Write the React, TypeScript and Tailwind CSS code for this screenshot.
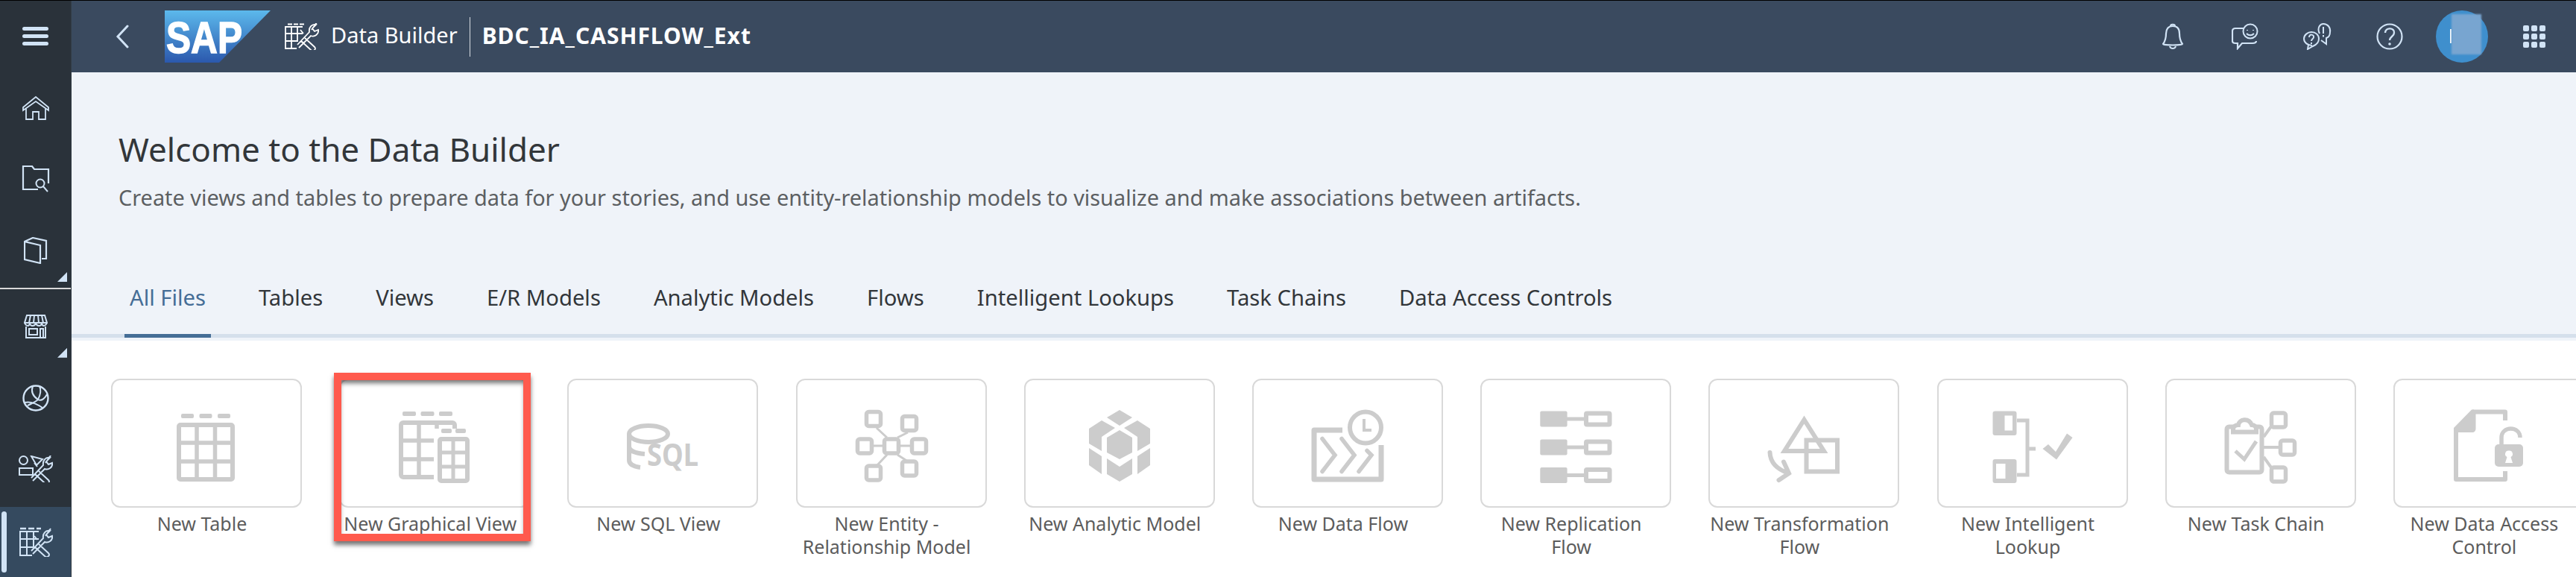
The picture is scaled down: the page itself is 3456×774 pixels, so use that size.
import type { ReactNode } from "react"

const FONT = "[font-family:'Noto_Sans','Open_Sans',sans-serif]"
const GREY = "#cccccc"
const SHELL = "#d1e3f5"

// card icons are drawn around the centre of the card, in page pixels
function CardIcon({ children }: { children: ReactNode }) {
  return (
    <svg width="160" height="130" viewBox="-80 -65 160 130" fill="none" stroke={GREY} strokeWidth="6">
      {children}
    </svg>
  )
}

function Dots({ x, y, w, gap, n }: { x: number; y: number; w: number; gap: number; n: number }) {
  return (
    <>
      {Array.from({ length: n }).map((_, i) => (
        <rect key={i} x={x + i * (w + gap)} y={y} width={w} height="6" rx="2" fill={GREY} stroke="none" />
      ))}
    </>
  )
}

function TableIcon() {
  return (
    <CardIcon>
      <Dots x={-34} y={-40} w={17} gap={7.5} n={3} />
      <rect x="-37" y="-25" width="72" height="73" rx="2" />
      <path d="M-13 -25V48M11.5 -25V48M-37 -1H35M-37 24H35" strokeWidth="5.5" />
    </CardIcon>
  )
}

function GraphicalViewIcon() {
  return (
    <CardIcon>
      <Dots x={-43} y={-43} w={18} gap={6.5} n={3} />
      <rect x="-45" y="-28" width="72" height="73" rx="3" />
      <path d="M-21 -28V45M3 -28V45M-45 -4H27M-45 21H27" strokeWidth="5.5" />
      <rect x="-1" y="-20" width="52" height="78" fill="#fff" stroke="none" />
      <Dots x={9} y={-20} w={14} gap={5} n={2} />
      <rect x="7" y="-6" width="37" height="56" rx="2" />
      <path d="M25 -6V50M7 12H44M7 31H44" strokeWidth="5" />
    </CardIcon>
  )
}

function SqlIcon() {
  return (
    <CardIcon>
      <ellipse cx="-19" cy="-13" rx="26" ry="11" />
      <path d="M-45 -13V22C-45 28 -38 31 -30 32M-45 4C-45 9 -38 13 -24 14" />
      <text
        x="-21"
        y="30"
        fill={GREY}
        stroke="none"
        fontFamily="'Noto Sans', sans-serif"
        fontWeight="700"
        fontSize="42"
        textLength="69"
        lengthAdjust="spacingAndGlyphs"
      >
        SQL
      </text>
    </CardIcon>
  )
}

function EntityIcon() {
  const boxes = [
    [-33.5, -42.5],
    [14.5, -36.5],
    [-45.5, -6],
    [-9.5, -6],
    [27.5, -6],
    [-33.5, 30],
    [14.5, 24],
  ]
  return (
    <CardIcon>
      <path d="M-20 -21L-6 -8M22 -15L8 -8M-25 3H-12M12 3H25M-20 30L-6 15M22 24L8 15" strokeWidth="3" />
      {boxes.map(([x, y], i) => (
        <rect key={i} x={x} y={y} width="19" height="19" rx="3" strokeWidth="5.5" />
      ))}
    </CardIcon>
  )
}

function AnalyticIcon() {
  return (
    <CardIcon>
      <g fill={GREY} stroke="none">
        <polygon points="0,-45 17,-35 0,-24 -17,-35" />
        <polygon points="0,-18 17,-8 17,12 0,21 -17,12 -17,-8" />
        <polygon points="-24,-31 -6,-21 -24,-9 -24,10 -41,0 -41,-20" />
        <polygon points="24,-31 6,-21 24,-9 24,10 41,0 41,-20" />
        <polygon points="-41,6 -24,17 -24,41 -41,29" />
        <polygon points="41,6 24,17 24,41 41,29" />
        <polygon points="-17,20 0,31 17,20 17,41 0,51 -17,41" />
      </g>
    </CardIcon>
  )
}

function DataFlowIcon() {
  return (
    <CardIcon>
      <path d="M-7 -18H-45V48H45V2" strokeWidth="7" strokeLinejoin="round" />
      <circle cx="24" cy="-21.5" r="21" />
      <path d="M22 -33V-18H32" strokeWidth="4" />
      <path
        d="M-34 -6.5L-17 15.5L-34 37.5M-8 -6.5L9 15.5L-8 37.5M26 9.5L32 15.5L15 37.5"
        strokeWidth="5.5"
        strokeLinecap="round"
      />
    </CardIcon>
  )
}

function ReplicationIcon() {
  const rows = [-43.5, -5.5, 32]
  return (
    <CardIcon>
      {rows.map((y) => (
        <g key={y}>
          <rect x="-47.7" y={y} width="36.3" height="21" rx="2" fill={GREY} stroke="none" />
          <path d={`M-12 ${y + 10.5}H12`} strokeWidth="5" />
          <rect x="14" y={y + 3} width="31.5" height="15" rx="1" />
        </g>
      ))}
    </CardIcon>
  )
}

function TransformationIcon() {
  return (
    <CardIcon>
      <path d="M0.5 -32L27 10H-26Z" />
      <rect x="3.5" y="-4.5" width="41.5" height="42" />
      <path d="M-45.5 12C-45 24 -38 34 -20 40M-27 24.5L-20 40L-33.5 49" strokeLinecap="round" />
    </CardIcon>
  )
}

function LookupIcon() {
  return (
    <CardIcon>
      <path d="M-21 -31H-7V42H-21M-7 7H4" strokeWidth="5" />
      <rect x="-53.5" y="-43.5" width="32" height="32.5" rx="3" fill={GREY} stroke="none" />
      <rect x="-37.5" y="-37.5" width="10.5" height="20" fill="#fff" stroke="none" />
      <rect x="-53.5" y="21" width="32" height="32" rx="3" fill={GREY} stroke="none" />
      <rect x="-49" y="27" width="12.5" height="20" fill="#fff" stroke="none" />
      <polygon points="13.5,7 21,1 31,11 46,-13.5 53.5,-8 32,21.5" fill={GREY} stroke="none" />
    </CardIcon>
  )
}

function TaskChainIcon() {
  return (
    <CardIcon>
      <rect x="-45.5" y="-22.5" width="47" height="61" rx="3" />
      <path
        d="M-37 -15.5V-19C-37 -23 -33 -25 -30 -25C-29 -33 -16 -35 -12 -25C-9 -25 -6 -23 -6 -19V-15.5Z"
        fill="#fff"
      />
      <path d="M-34 10L-22 21L-6 -3" strokeWidth="5" />
      <path d="M4 -9L14 -23M4 5H24M4 18L14 32" strokeWidth="4" />
      <rect x="14.5" y="-41" width="19" height="19" rx="3" strokeWidth="5.5" />
      <rect x="26.5" y="-4" width="19" height="19" rx="3" strokeWidth="5.5" />
      <rect x="14.5" y="32" width="19" height="19" rx="3" strokeWidth="5.5" />
    </CardIcon>
  )
}

function AccessIcon() {
  return (
    <CardIcon>
      <path d="M-22 -42.5H22V-31M-44 -15V48H22V37" strokeLinejoin="round" />
      <path d="M-23 -45.5L-47 -21V-15H-22C-19.5 -15 -17.5 -17 -17.5 -20V-40H-20V-45.5Z" fill={GREY} stroke="none" />
      <path d="M17 3V-8C17 -24 42 -24 42 -8" strokeWidth="5.5" />
      <rect x="8" y="1" width="38" height="30" rx="5" fill={GREY} stroke="none" />
      <path d="M27 9.5A4.5 4.5 0 0 1 29.5 18L32 26H22L24.500 18A4.5 4.5 0 0 1 27 9.5Z" fill="#fff" stroke="none" />
    </CardIcon>
  )
}

const cards = [
  { label: "New Table", icon: <TableIcon /> },
  { label: "New Graphical View", icon: <GraphicalViewIcon />, marked: true },
  { label: "New SQL View", icon: <SqlIcon /> },
  { label: "New Entity - Relationship Model", icon: <EntityIcon /> },
  { label: "New Analytic Model", icon: <AnalyticIcon /> },
  { label: "New Data Flow", icon: <DataFlowIcon /> },
  { label: "New Replication Flow", icon: <ReplicationIcon /> },
  { label: "New Transformation Flow", icon: <TransformationIcon /> },
  { label: "New Intelligent Lookup", icon: <LookupIcon /> },
  { label: "New Task Chain", icon: <TaskChainIcon /> },
  { label: "New Data Access Control", icon: <AccessIcon /> },
]

const tabs = [
  "All Files",
  "Tables",
  "Views",
  "E/R Models",
  "Analytic Models",
  "Flows",
  "Intelligent Lookups",
  "Task Chains",
  "Data Access Controls",
]

function ShellIcon({ w, h, children }: { w: number; h: number; children: ReactNode }) {
  return (
    <svg width={w} height={h} viewBox={`0 0 ${w} ${h}`} fill="none" stroke={SHELL} strokeWidth="2">
      {children}
    </svg>
  )
}

const toolsPath =
  "M20 33L36 16C35 10 39 5 45 6L40 11L43 15L48 13C49 19 43 23 38 21L22 37M28 18L24 13M30 24L43 36C46 39 41 43 38 40L25 28M39 13L46 3"

const sideItems: { icon: ReactNode; corner?: boolean }[] = [
  {
    icon: (
      <ShellIcon w={36} h={32}>
        <path d="M1 15L18 1L35 15V19L18 7L1 19ZM5 17V31H14V21H22V31H31V17" strokeWidth="1.800" />
      </ShellIcon>
    ),
  },
  {
    icon: (
      <ShellIcon w={38} h={36}>
        <path d="M22 32H2V1H14L17 5H36V24" strokeWidth="2.200" />
        <circle cx="25" cy="24" r="5.500" />
        <path d="M29 28L35 35" />
      </ShellIcon>
    ),
  },
  {
    icon: (
      <ShellIcon w={32} h={36}>
        <path d="M1 6V30L22 35V11L1 6L12 1L30 5V29H24" strokeWidth="2.200" />
      </ShellIcon>
    ),
    corner: true,
  },
]

const sideItemsBelow: { icon: ReactNode; corner?: boolean }[] = [
  {
    icon: (
      <ShellIcon w={32} h={32}>
        <path d="M4 1H28L31 11H1Z" />
        <path d="M9 1L7 11M14 1L13 11M19 1L20 11M24 1L26 11" />
        <path d="M1 11C3 16 7 16 8 12C9 16 14 16 16 12C18 16 23 16 24 12C25 16 29 16 31 11" />
        <path d="M3 16V31H29V16M7 19H18V27H7ZM22 31V19H26V31" />
      </ShellIcon>
    ),
    corner: true,
  },
  {
    icon: (
      <ShellIcon w={36} h={36}>
        <circle cx="18" cy="18" r="16.500" strokeWidth="2.400" />
        <path d="M14 2C11 10 15 16 21 20C26 23 31 17 33 13M3 24C11 22 20 26 27 31M21 20C18 23 13 25 7 28M23 2C26 8 24 14 21 20" />
      </ShellIcon>
    ),
  },
  {
    icon: (
      <ShellIcon w={46} h={36}>
        <circle cx="6.500" cy="6.500" r="5.500" />
        <rect x="1" y="17" width="18" height="9" />
        <path d="M17 1L32 5L24 13Z" />
        <path d={toolsPath} transform="translate(-3 -3)" />
      </ShellIcon>
    ),
  },
]

function SideButton({ icon, corner }: { icon: ReactNode; corner?: boolean }) {
  return (
    <div className="relative flex h-[96px] w-full items-center justify-center">
      {icon}
      {corner && <span className="absolute right-[5px] bottom-[6px] h-[13px] w-[13px] bg-[#d1e3f5] [clip-path:polygon(100%_0,100%_100%,0_100%)]" />}
    </div>
  )
}

function Sidebar() {
  return (
    <aside className="flex h-full w-[96px] shrink-0 flex-col border-r border-[#333c45] bg-[#2a323a]">
      <div className="flex h-[96px] items-center justify-center">
        <div className="flex w-[35px] flex-col gap-[5px]">
          <span className="h-[5px] rounded-full bg-[#d1e3f5]" />
          <span className="h-[5px] rounded-full bg-[#d1e3f5]" />
          <span className="h-[5px] rounded-full bg-[#d1e3f5]" />
        </div>
      </div>
      {sideItems.map((item, i) => (
        <SideButton key={i} {...item} />
      ))}
      <div className="my-[2px] h-[2px] bg-[#d9d9d9]" />
      {sideItemsBelow.map((item, i) => (
        <SideButton key={i} {...item} />
      ))}
      <div className="relative mt-[3px] flex h-[94px] items-center justify-center bg-[#354a5f]">
        <span className="absolute top-[6px] left-[2px] h-[82px] w-[7px] rounded-full bg-[#d1e3f5]" />
        <ShellIcon w={46} h={40}>
          <path d="M2 2H10M13 2H21M24 2H30" strokeWidth="2.500" />
          <path d="M27 6H2V38H18M2 16H27M2 27H20M11 6V38M20 6V28" />
          <path d={toolsPath} transform="translate(-3 -1)" />
        </ShellIcon>
      </div>
    </aside>
  )
}

function SapLogo() {
  return (
    <svg width="142" height="70" viewBox="0 0 142 70">
      <defs>
        <linearGradient id="sapBlue" x1="0" y1="0" x2="0" y2="1">
          <stop offset="0" stopColor="#5cb9ec" />
          <stop offset="1" stopColor="#2b58ad" />
        </linearGradient>
      </defs>
      <polygon points="0,0 142,0 73,70 0,70" fill="url(#sapBlue)" />
      <text
        x="2"
        y="57"
        fill="#fff"
        stroke="#fff"
        strokeWidth="1.500"
        fontFamily="'Liberation Sans', sans-serif"
        fontWeight="700"
        fontSize="60"
        textLength="102"
        lengthAdjust="spacingAndGlyphs"
      >
        SAP
      </text>
    </svg>
  )
}

function Header() {
  return (
    <header className="flex h-[96px] items-center bg-[#3a4a5f] text-white">
      <div className="ml-[59px] mr-[48px]">
        <svg width="18" height="32" viewBox="0 0 18 32" fill="none" stroke={SHELL} strokeWidth="3" strokeLinecap="round">
          <path d="M16 2L3 16L16 30" />
        </svg>
      </div>
      <SapLogo />
      <div className="ml-[19px] mr-[16px]">
        <svg width="46" height="36" viewBox="0 0 46 36" fill="none" stroke="#fff" strokeWidth="1.800">
          <path d="M4 1.500H10M12 1.500H18M20 1.500H26" />
          <path d="M24 5H1V34H16M1 14H24M1 24H18M9 5V34M17 5V24" />
          <path d={toolsPath} transform="translate(-3 -4)" />
        </svg>
      </div>
      <span className="mb-[3px] text-[29px] leading-[1.2]">Data Builder</span>
      <span className="mx-[16px] h-[53px] w-px bg-[#d8dde3]" />
      <span className="mb-[3px] text-[30px] leading-[1.2] font-bold tracking-[1px]">BDC_IA_CASHFLOW_Ext</span>

      <div className="ml-auto mr-[8px] flex items-center">
        <div className="flex w-[97px] justify-center">
          <ShellIcon w={32} h={36}>
            <path d="M3 28C6 24 7 21 7 14C7 8 10 4 16 4C22 4 25 8 25 14C25 21 26 24 29 28C29 30 3 30 3 28Z" strokeWidth="2.200" />
            <path d="M13 4C13 1 19 1 19 4M12 31C13 35 19 35 20 31" />
          </ShellIcon>
        </div>
        <div className="flex w-[97px] justify-center">
          <ShellIcon w={36} h={36}>
            <path d="M16 7H5C2 7 1 8 1 11V24C1 26 2 27 5 27H8V34L14 27H28C31 27 33 26 33 24" strokeWidth="2.200" />
            <circle cx="25" cy="11" r="9.500" />
            <path d="M21 9V10M29 9V10M20 14C23 17 27 17 30 14" />
          </ShellIcon>
        </div>
        <div className="flex w-[97px] justify-center">
          <ShellIcon w={38} h={36}>
            <path d="M12 30C6 30 1 26 1 21C1 16 6 12 11 12C17 12 21 16 21 21C21 26 18 29 13 31L6 35L7 29" />
            <path d="M22 14C18 6 23 1 27 1C33 1 37 6 36 12C36 16 34 19 31 20V28L24 23" />
            <path d="M27 5V14M27 16V18.500M8 19C8 14 15 15 14 19C14 21 11 21 11 24M11 26V28" />
          </ShellIcon>
        </div>
        <div className="flex w-[97px] justify-center">
          <ShellIcon w={36} h={36}>
            <circle cx="18" cy="18" r="16.500" strokeWidth="2.200" />
            <path d="M12 13C12 5 25 6 24 13C24 18 18 18 18 23" strokeWidth="2.400" />
            <circle cx="18" cy="28" r="1.800" fill={SHELL} stroke="none" />
          </ShellIcon>
        </div>
        <div className="flex w-[97px] justify-center">
          <div className="relative h-[70px] w-[70px] rounded-full bg-[#3f8fcd]">
            <span className="absolute top-[25px] left-[19px] h-[19px] w-[2px] bg-white" />
            <span className="absolute top-[5px] left-[21px] h-[54px] w-[40px] bg-[#78a5d0] blur-[1px]" />
          </div>
        </div>
        <div className="flex w-[97px] justify-center">
          <div className="grid grid-cols-3 gap-[3px]">
            {Array.from({ length: 9 }).map((_, i) => (
              <span key={i} className="h-[8px] w-[8px] rounded-[2px] bg-[#d1e3f5]" />
            ))}
          </div>
        </div>
      </div>
    </header>
  )
}

function Welcome() {
  return (
    <section className="flex h-[360px] flex-col bg-[#eff3f9]">
      <h1 className="mt-[75px] ml-[63px] text-[44px] leading-[56px] font-normal text-[#32363a]">Welcome to the Data Builder</h1>
      <p className="mt-[18px] ml-[63px] text-[28.900px] leading-[38px] text-[#5c5f62]">
        Create views and tables to prepare data for your stories, and use entity-relationship models to visualize and make associations between artifacts.
      </p>
      <nav className="mt-auto mb-[4px] flex border-b-[5px] border-[#d5e0ec] pl-[71px]">
        {tabs.map((tab, i) => (
          <div key={tab} className="relative mr-[57px] px-[7px] pb-[29px]">
            <span className={`text-[29.200px] leading-[40px] ${i === 0 ? "text-[#456d96]" : "text-[#32363a]"}`}>{tab}</span>
            {i === 0 && <span className="absolute right-0 -bottom-[5px] left-0 h-[5px] bg-[#456d96]" />}
          </div>
        ))}
      </nav>
    </section>
  )
}

function Cards() {
  return (
    <section className="flex gap-[50.200px] bg-white pt-[51px] pl-[53px]">
      {cards.map((card) => (
        <div key={card.label} className="relative w-[256px] shrink-0">
          <div className="flex h-[173px] items-center justify-center rounded-[12px] border-2 border-[#d9d9d9] bg-white">{card.icon}</div>
          <p className="mt-[6px] pr-[12px] text-center text-[25px] leading-[31px] text-[#5c5c5c]">{card.label}</p>
          {card.marked && (
            <div className="absolute top-[-8px] left-[-7px] h-[226px] w-[264px] border-[10px] border-[#ff5a4d] shadow-[0_5px_6px_rgba(0,0,0,0.55),inset_0_6px_6px_-2px_rgba(0,0,0,0.55)]" />
          )}
        </div>
      ))}
    </section>
  )
}

export default function App() {
  return (
    <div className={`flex h-[774px] w-[3456px] flex-col overflow-hidden bg-white ${FONT}`}>
      <div className="h-px shrink-0 bg-black" />
      <div className="flex min-h-0 flex-1">
        <Sidebar />
        <main className="min-w-0 flex-1">
          <Header />
          <Welcome />
          <Cards />
        </main>
      </div>
    </div>
  )
}
